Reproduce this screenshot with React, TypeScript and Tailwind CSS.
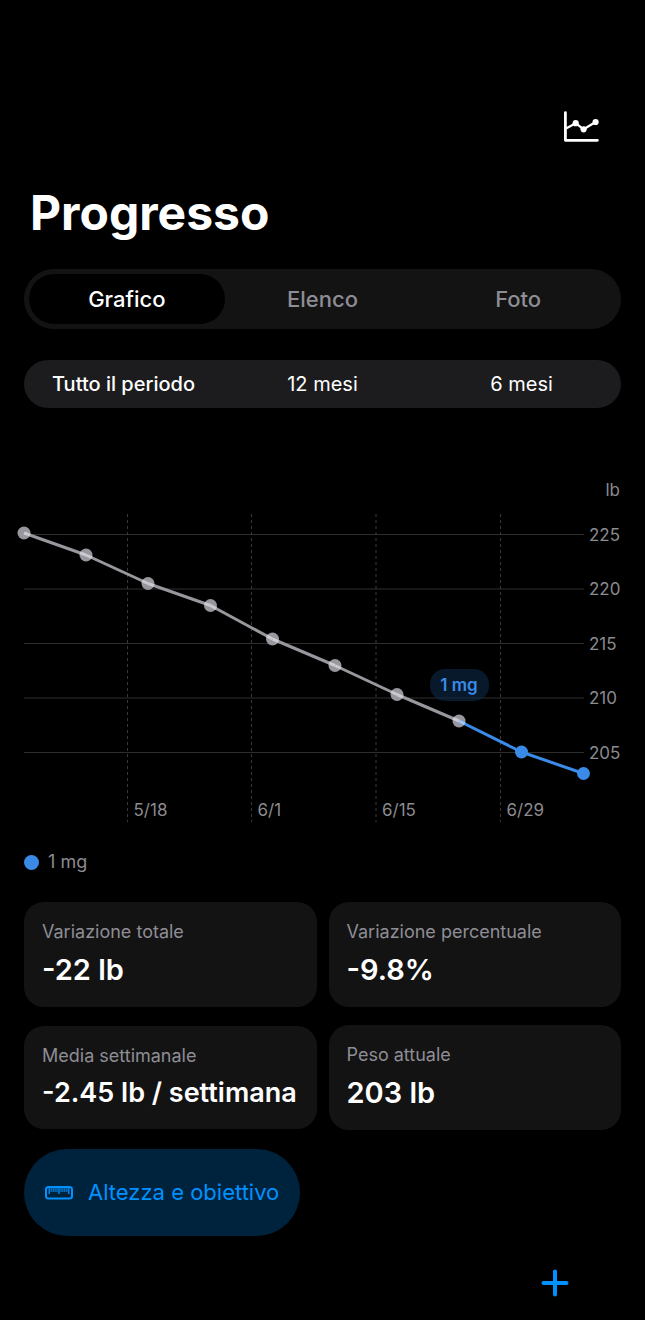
import React, { useState } from 'react';
import clsx from 'clsx';

interface WeightPoint {
  x: number;
  y: number;
  dosed: boolean;
}

interface Stat {
  label: string;
  value: string;
  compact?: boolean;
}

const tabs = ['Grafico', 'Elenco', 'Foto'];
const periods = ['Tutto il periodo', '12 mesi', '6 mesi'];

const weekly: WeightPoint[] = [
  { x: 0, y: 53, dosed: false },
  { x: 62, y: 75, dosed: false },
  { x: 124, y: 103.5, dosed: false },
  { x: 186.5, y: 125.5, dosed: false },
  { x: 248.5, y: 159, dosed: false },
  { x: 311, y: 185.5, dosed: false },
  { x: 373, y: 214.5, dosed: false },
  { x: 435, y: 241, dosed: false },
  { x: 497.5, y: 272, dosed: true },
  { x: 559.5, y: 293.5, dosed: true },
];

const weightTicks = [
  { label: '225', y: 54.5 },
  { label: '220', y: 109 },
  { label: '215', y: 163.5 },
  { label: '210', y: 218 },
  { label: '205', y: 272.5 },
];

const dateTicks = [
  { label: '5/18', x: 103.5 },
  { label: '6/1', x: 227.5 },
  { label: '6/15', x: 352 },
  { label: '6/29', x: 476.5 },
];

const stats: Stat[] = [
  { label: 'Variazione totale', value: '-22 lb' },
  { label: 'Variazione percentuale', value: '-9.8%' },
  { label: 'Media settimanale', value: '-2.45 lb / settimana', compact: true },
  { label: 'Peso attuale', value: '203 lb' },
];

const ChartIcon: React.FC = () => (
  <svg width="36" height="32" viewBox="0 0 36 32" fill="none" stroke="white" strokeLinecap="round" strokeLinejoin="round">
    <path d="M2.4 1.7V29.3H34.4" strokeWidth="2.8" />
    <path d="M3 17.5L12.7 12.2L20.6 18.3L32.6 11" strokeWidth="2.2" />
    <g fill="white" stroke="none">
      <circle cx="12.7" cy="12.2" r="3.1" />
      <circle cx="20.6" cy="18.3" r="3.1" />
      <circle cx="32.6" cy="11" r="3.1" />
    </g>
  </svg>
);

const RulerIcon: React.FC = () => (
  <svg width="28" height="14" viewBox="0 0 28 14" fill="none" stroke="#0091ff">
    <rect x="1" y="1" width="26" height="11.5" rx="2.5" strokeWidth="2" />
    <path d="M4.2 2V8M14 2V8M23.8 2V8" strokeWidth="1.3" />
    <path d="M6.2 2V6M8.2 2V6M10.1 2V6M12 2V6M16 2V6M17.9 2V6M19.8 2V6M21.8 2V6" strokeWidth="1" />
  </svg>
);

const WeightChart: React.FC = () => (
  <svg viewBox="0 0 597 344" className="block w-full overflow-visible text-[17px]" role="img" aria-label="Peso in lb">
    <g stroke="#2e2e2f" strokeWidth="1">
      {weightTicks.map((t) => (
        <line key={t.label} x1="0" x2="560" y1={t.y} y2={t.y} />
      ))}
    </g>
    <g stroke="#3a3a3c" strokeWidth="1" strokeDasharray="3 3">
      {dateTicks.map((t) => (
        <line key={t.label} x1={t.x} x2={t.x} y1="34" y2="342" />
      ))}
    </g>

    {/* Axis labels */}
    <g fill="#8b8b90">
      <text x="596" y="16" textAnchor="end">lb</text>
      {weightTicks.map((t) => (
        <text key={t.label} x="565" y={t.y + 6}>{t.label}</text>
      ))}
      {dateTicks.map((t) => (
        <text key={t.label} x={t.x + 6} y="336">{t.label}</text>
      ))}
    </g>

    {/* Points first, the line is laid over them */}
    {weekly.map((p) => (
      <circle key={p.x} cx={p.x} cy={p.y} r="6.5" fill={p.dosed ? '#3a8ae8' : '#98979e'} />
    ))}
    {weekly.slice(1).map((p, i) => (
      <line
        key={p.x}
        x1={weekly[i].x}
        y1={weekly[i].y}
        x2={p.x}
        y2={p.y}
        stroke={p.dosed ? '#3a8ae8' : '#98979e'}
        strokeWidth="3"
      />
    ))}
    {weekly.filter((p) => !p.dosed).map((p, i) => {
      const prev = weekly[i - 1];
      const next = weekly[i + 1];
      const step = (a: WeightPoint, b: WeightPoint) => {
        const d = Math.hypot(b.x - a.x, b.y - a.y);
        return { x: a.x + ((b.x - a.x) / d) * 6.5, y: a.y + ((b.y - a.y) / d) * 6.5 };
      };
      const before = prev ? step(p, prev) : p;
      const after = step(p, next);
      return (
        <g key={p.x} strokeWidth="3">
          <line x1={before.x} y1={before.y} x2={p.x} y2={p.y} stroke="#cbcad1" />
          <line x1={p.x} y1={p.y} x2={after.x} y2={after.y} stroke={next.dosed ? '#a3c8f5' : '#cbcad1'} />
        </g>
      );
    })}

    {/* Dose badge */}
    <rect x="406" y="189" width="59" height="32" rx="15" fill="#0d2a48" fillOpacity="0.6" />
    <text x="435" y="211" textAnchor="middle" fill="#3a8ae8" className="font-semibold">1 mg</text>
  </svg>
);

const App: React.FC = () => {
  const [tab, setTab] = useState(tabs[0]);
  const [period, setPeriod] = useState(periods[0]);

  return (
    <main className="min-h-screen bg-black px-6 pt-[111px] pb-6 font-['Inter',sans-serif] text-white">
      <header>
        <div className="flex justify-end pr-[22px]">
          <button type="button" aria-label="Grafico">
            <ChartIcon />
          </button>
        </div>
        <h1 className="mt-[38px] pl-1.5 text-[48px] leading-[64px] font-bold">Progresso</h1>
      </header>

      <nav className="mt-6 grid h-[60px] grid-cols-3 rounded-full bg-[#131313] p-[5px]">
        {tabs.map((t) => (
          <button
            key={t}
            type="button"
            onClick={() => setTab(t)}
            className={clsx('rounded-full text-[22px] font-medium', t === tab ? 'bg-black text-white' : 'text-[#8e8d95]')}
          >
            {t}
          </button>
        ))}
      </nav>

      <div className="mt-[31px] grid h-12 grid-cols-3 rounded-full bg-[#1c1c1e]">
        {periods.map((p) => (
          <button
            key={p}
            type="button"
            onClick={() => setPeriod(p)}
            className={clsx('text-[20px]', p === period ? 'font-medium' : 'font-normal')}
          >
            {p}
          </button>
        ))}
      </div>

      <section className="mt-[72px]">
        <WeightChart />
        <div className="mt-[26px] flex items-center gap-[9px] text-[18px] leading-6 text-[#8b8b90]">
          <span className="size-[15px] rounded-full bg-[#3a8ae8]" />
          1 mg
        </div>
      </section>

      <section className="mt-7 grid grid-cols-2 items-center gap-x-3 gap-y-[18px]">
        {stats.map((s) => (
          <div key={s.label} className="rounded-[20px] bg-[#131313] px-[18px] py-[18px]">
            <p className="text-[18px] leading-6 text-[#8e8d95]">{s.label}</p>
            <p
              className={clsx(
                'mt-1.5 font-semibold whitespace-nowrap',
                s.compact ? 'text-[27px] leading-[37px]' : 'text-[29px] leading-[39px]',
              )}
            >
              {s.value}
            </p>
          </div>
        ))}
      </section>

      <button
        type="button"
        className="mt-[19px] flex h-[87px] items-center gap-[15px] rounded-[44px] bg-[#00233d] px-[21px] text-[22px] text-[#0091ff]"
      >
        <RulerIcon />
        Altezza e obiettivo
      </button>

      <div className="mt-[33px] flex justify-end pr-[52px]">
        <button type="button" aria-label="Aggiungi">
          <svg width="28" height="28" viewBox="0 0 28 28" stroke="#0091ff" strokeWidth="4" strokeLinecap="round">
            <path d="M14 2.5V25.5M2.5 14H25.5" />
          </svg>
        </button>
      </div>
    </main>
  );
};

export default App;
